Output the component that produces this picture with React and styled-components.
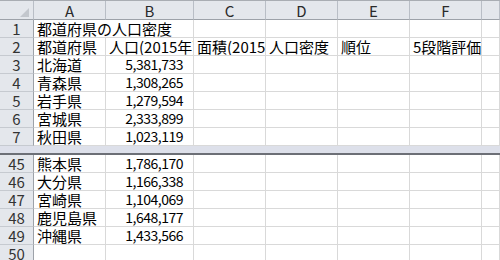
import React from 'react';
import styled, { createGlobalStyle } from 'styled-components';

const GlobalStyle = createGlobalStyle`
  html, body {
    margin: 0;
    padding: 0;
    background: #fff;
  }
  body {
    font-family: "Noto Sans CJK JP", "Noto Sans", sans-serif;
    color: #000;
  }
`;

const Sheet = styled.div`
  width: 500px;
  height: 260px;
  overflow: hidden;
  border-top: 1px solid #a9adb3;
  box-sizing: border-box;
  display: grid;
  grid-template-columns: 34px 72px 88px 72px 72px 72px 72px 1fr;
  grid-template-rows: 19px repeat(7, 18px) 9px repeat(6, 18px);
`;

const Corner = styled.div`
  position: relative;
  background: #e4e7ec;
  border-right: 1px solid #b9bec6;
  border-bottom: 1px solid #9da2a9;
  box-sizing: border-box;

  &::after {
    content: '';
    position: absolute;
    right: 4px;
    bottom: 2px;
    width: 0;
    height: 0;
    border-left: 9px solid transparent;
    border-bottom: 9px solid #c3c7cd;
  }
`;

const ColHead = styled.div`
  background: #e4e7ec;
  border-right: 1px solid #b9bec6;
  border-bottom: 1px solid #9da2a9;
  box-sizing: border-box;
  display: flex;
  align-items: center;
  justify-content: center;
  font-size: 15px;
  font-weight: 400;
  color: #2a2a2a;
  line-height: 1;
`;

const RowHead = styled.div`
  background: #e4e7ec;
  border-right: 1px solid #9da2a9;
  border-bottom: 1px solid #c6cad0;
  box-sizing: border-box;
  display: flex;
  align-items: center;
  justify-content: center;
  font-size: 15px;
  font-weight: 400;
  color: #333;
  line-height: 1;
`;

const Cell = styled.div`
  grid-column: span ${p => p.$span || 1};
  border-right: 1px solid #d9d9d9;
  border-bottom: 1px solid #d9d9d9;
  box-sizing: border-box;
  display: flex;
  align-items: center;
  justify-content: ${p => (p.$num ? 'flex-end' : 'flex-start')};
  padding: ${p => (p.$num ? '0 10px 0 0' : '0 0 0 3px')};
  overflow: hidden;
  white-space: nowrap;
  font-size: ${p => (p.$num ? '14px' : '15px')};
  letter-spacing: ${p => (p.$num ? '-0.5px' : '0')};
  line-height: 17px;
  font-weight: 400;
`;

const SplitBar = styled.div`
  grid-column: 1 / -1;
  background: #dde0ea;
  border-bottom: 2px solid #6c6f76;
  box-sizing: border-box;
`;

const columns = ['A', 'B', 'C', 'D', 'E', 'F', ''];

const topRows = [
  { n: 1, cells: [{ text: '都道府県の人口密度', span: 2 }, {}, {}, {}, {}, {}] },
  {
    n: 2,
    cells: [
      { text: '都道府県' },
      { text: '人口(2015年)' },
      { text: '面積(2015年)' },
      { text: '人口密度' },
      { text: '順位' },
      { text: '5段階評価' },
      {},
    ],
  },
  { n: 3, pref: '北海道', pop: '5,381,733' },
  { n: 4, pref: '青森県', pop: '1,308,265' },
  { n: 5, pref: '岩手県', pop: '1,279,594' },
  { n: 6, pref: '宮城県', pop: '2,333,899' },
  { n: 7, pref: '秋田県', pop: '1,023,119' },
];

const bottomRows = [
  { n: 45, pref: '熊本県', pop: '1,786,170' },
  { n: 46, pref: '大分県', pop: '1,166,338' },
  { n: 47, pref: '宮崎県', pop: '1,104,069' },
  { n: 48, pref: '鹿児島県', pop: '1,648,177' },
  { n: 49, pref: '沖縄県', pop: '1,433,566' },
  { n: 50, pref: '', pop: '' },
];

const renderRow = row => {
  const cells = row.cells || [
    { text: row.pref },
    { text: row.pop, num: true },
    {},
    {},
    {},
    {},
    {},
  ];
  return (
    <React.Fragment key={row.n}>
      <RowHead>{row.n}</RowHead>
      {cells.map((c, i) => (
        <Cell key={i} $span={c.span} $num={c.num}>
          {c.text}
        </Cell>
      ))}
    </React.Fragment>
  );
};

const App = () => (
  <>
    <GlobalStyle />
    <Sheet>
      <Corner />
      {columns.map((c, i) => (
        <ColHead key={i}>{c}</ColHead>
      ))}
      {topRows.map(renderRow)}
      <SplitBar />
      {bottomRows.map(renderRow)}
    </Sheet>
  </>
);

export default App;
